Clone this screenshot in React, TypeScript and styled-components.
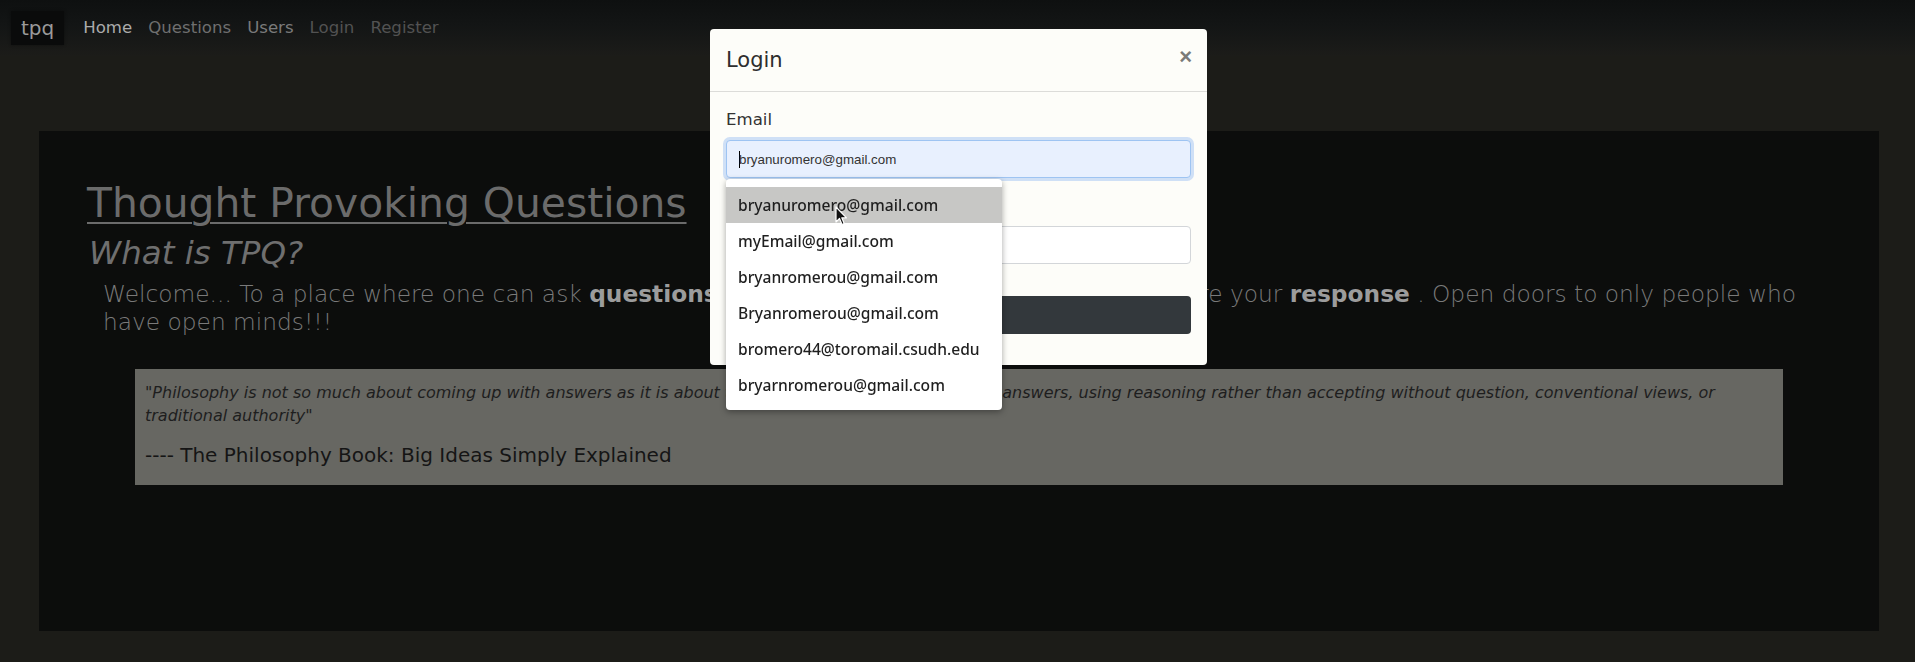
import React from "react";
import styled, { createGlobalStyle } from "styled-components";

const GlobalStyle = createGlobalStyle`
  html, body {
    margin: 0;
    padding: 0;
    height: 100%;
    overflow: hidden;
    background: #1c1c18;
    font-family: "DejaVu Sans", "Noto Sans", sans-serif;
  }
  * { box-sizing: border-box; }
`;

const Page = styled.div`
  position: relative;
  min-height: 662px;
  background: #1c1c18;
`;

const Navbar = styled.nav`
  height: 56px;
  display: flex;
  align-items: center;
  padding: 0 11px;
  background: linear-gradient(180deg, #0e1010 0%, #131515 45%, #1c1c19 100%);
`;

const Brand = styled.a`
  display: block;
  background: #0a0b0b;
  color: #9a9a9a;
  font-size: 20px;
  line-height: 30px;
  padding: 2px 10px;
  margin-right: 11px;
  text-decoration: none;
  box-shadow: 0 0 3px rgba(0, 0, 0, 0.4);
`;

const NavList = styled.div`
  display: flex;
  align-items: center;
`;

const NavLink = styled.a<{ $tone: string }>`
  display: block;
  padding: 8px;
  font-size: 16.6px;
  line-height: 24px;
  color: ${(p) => p.$tone};
  text-decoration: none;
`;

const Jumbotron = styled.section`
  margin: 75px 36px 0 39px;
  height: 500px;
  background: #0c0d0c;
  padding: 48px 48px 0 48px;
`;

const Title = styled.a`
  display: block;
  width: fit-content;
  font-size: 40.8px;
  line-height: 48px;
  font-weight: 400;
  color: #6b6b6b;
  text-decoration: underline;
  text-decoration-thickness: 2px;
  text-underline-offset: 5px;
  margin: 0 0 8px;
`;

const Subtitle = styled.h2`
  font-size: 32.5px;
  line-height: 37px;
  font-weight: 400;
  font-style: italic;
  color: #6f6f6f;
  margin: 0 0 8px 2px;
`;

const Welcome = styled.p`
  font-size: 23.3px;
  line-height: 28px;
  font-weight: 300;
  color: #7a7a7a;
  margin: 0 0 0 16px;

  b {
    font-weight: 700;
    color: #9c9c9c;
  }
`;

const QuoteBox = styled.blockquote`
  margin: 33px 48px 0;
  padding: 12px 10px 18px;
  background: #676762;
`;

const QuoteText = styled.p`
  font-size: 16px;
  line-height: 23px;
  font-style: italic;
  color: #1e1e1e;
  margin: 0 0 16px;
`;

const QuoteSource = styled.footer`
  font-size: 20px;
  line-height: 24px;
  color: #151515;
`;

const ModalLayer = styled.div`
  position: fixed;
  inset: 0;
  display: flex;
  justify-content: center;
  align-items: flex-start;
  padding-left: 2px;
`;

const ModalDialog = styled.div`
  width: 497px;
  margin-top: 29px;
  background: #fdfdf9;
  border-radius: 4px;
`;

const ModalHeader = styled.div`
  display: flex;
  align-items: center;
  justify-content: space-between;
  padding: 16px;
  border-bottom: 1px solid #dcdcd9;
`;

const ModalTitle = styled.h5`
  margin: 0;
  font-size: 21px;
  line-height: 30px;
  font-weight: 400;
  color: #2e2e2e;
`;

const CloseButton = styled.button`
  border: 0;
  background: transparent;
  padding: 0;
  margin: -6px -1px 0 0;
  font-family: "Liberation Sans", Arial, sans-serif;
  font-size: 22px;
  font-weight: 700;
  line-height: 1;
  color: #7a7a78;
`;

const ModalBody = styled.div`
  padding: 16px 16px 31px;
`;

const FormGroup = styled.div`
  position: relative;
  margin-bottom: 16px;
`;

const Label = styled.label`
  display: block;
  font-size: 16.6px;
  line-height: 24px;
  color: #333;
  margin-bottom: 8px;
`;

const FieldBox = styled.div<{ $focused?: boolean }>`
  height: 38px;
  display: flex;
  align-items: center;
  padding: 0 12px;
  border-radius: 4px;
  border: 1px solid ${(p) => (p.$focused ? "#9ec4f2" : "#d3d6d9")};
  background: ${(p) => (p.$focused ? "#e8f0fe" : "#fff")};
  box-shadow: ${(p) =>
    p.$focused ? "0 0 0 3px rgba(120, 170, 240, 0.35)" : "none"};
  font-family: "Liberation Sans", Arial, sans-serif;
  font-size: 13.33px;
  color: #333;
`;

const Caret = styled.span`
  width: 1px;
  height: 17px;
  background: #000;
  margin-right: -1px;
`;

const SubmitButton = styled.button`
  display: block;
  width: 100%;
  height: 38px;
  margin-top: 32px;
  border: 0;
  border-radius: 4px;
  background: #33383c;
  color: #fff;
  font-family: "DejaVu Sans", sans-serif;
  font-size: 16px;
`;

const Suggestions = styled.ul`
  position: absolute;
  top: calc(100% + 1px);
  left: 0;
  width: 276px;
  margin: 0;
  padding: 8px 0 7px;
  list-style: none;
  background: #fff;
  border-radius: 4px;
  box-shadow: 0 2px 6px rgba(0, 0, 0, 0.35);
  z-index: 5;
`;

const Suggestion = styled.li<{ $hover?: boolean }>`
  height: 36px;
  display: flex;
  align-items: center;
  padding: 0 12px;
  font-family: "Noto Sans", "DejaVu Sans", sans-serif;
  font-size: 15.6px;
  font-weight: 500;
  color: #1f1f1f;
  background: ${(p) => (p.$hover ? "#c7c7c5" : "transparent")};
`;

const Cursor = styled.svg`
  position: absolute;
  left: 109px;
  top: 27px;
`;

const emails = [
  "bryanuromero@gmail.com",
  "myEmail@gmail.com",
  "bryanromerou@gmail.com",
  "Bryanromerou@gmail.com",
  "bromero44@toromail.csudh.edu",
  "bryarnromerou@gmail.com",
];

export default function App() {
  return (
    <>
      <GlobalStyle />
      <Page>
        <Navbar>
          <Brand>tpq</Brand>
          <NavList>
            <NavLink $tone="#ababab">Home</NavLink>
            <NavLink $tone="#6f6f6f">Questions</NavLink>
            <NavLink $tone="#7a7a7a">Users</NavLink>
            <NavLink $tone="#525252">Login</NavLink>
            <NavLink $tone="#525252">Register</NavLink>
          </NavList>
        </Navbar>
        <Jumbotron>
          <Title>Thought Provoking Questions</Title>
          <Subtitle>What is TPQ?</Subtitle>
          <Welcome>
            Welcome... To a place where one can ask <b>questions</b> , think
            them over with all others and share your <b>response</b> . Open
            doors to only people who have open minds!!!
          </Welcome>
          <QuoteBox>
            <QuoteText>
              "Philosophy is not so much about coming up with answers as it is
              about the process of trying to find these answers, using reasoning
              rather than accepting without question, conventional views, or
              traditional authority"
            </QuoteText>
            <QuoteSource>
              ---- The Philosophy Book: Big Ideas Simply Explained
            </QuoteSource>
          </QuoteBox>
        </Jumbotron>
        <ModalLayer>
          <ModalDialog>
            <ModalHeader>
              <ModalTitle>Login</ModalTitle>
              <CloseButton aria-label="Close">×</CloseButton>
            </ModalHeader>
            <ModalBody>
              <FormGroup>
                <Label>Email</Label>
                <FieldBox $focused>
                  <Caret />
                  bryanuromero@gmail.com
                </FieldBox>
                <Suggestions>
                  {emails.map((e, i) => (
                    <Suggestion key={e} $hover={i === 0}>
                      {e}
                    </Suggestion>
                  ))}
                  <Cursor width="13" height="20" viewBox="0 0 13 20">
                    <path
                      d="M1 1 L1 16 L4.5 12.5 L7 18.5 L9.2 17.6 L6.8 11.8 L11.5 11.8 Z"
                      fill="#111"
                      stroke="#fff"
                      strokeWidth="1.2"
                      strokeLinejoin="round"
                    />
                  </Cursor>
                </Suggestions>
              </FormGroup>
              <FormGroup>
                <Label>Password</Label>
                <FieldBox />
              </FormGroup>
              <SubmitButton>Login</SubmitButton>
            </ModalBody>
          </ModalDialog>
        </ModalLayer>
      </Page>
    </>
  );
}
